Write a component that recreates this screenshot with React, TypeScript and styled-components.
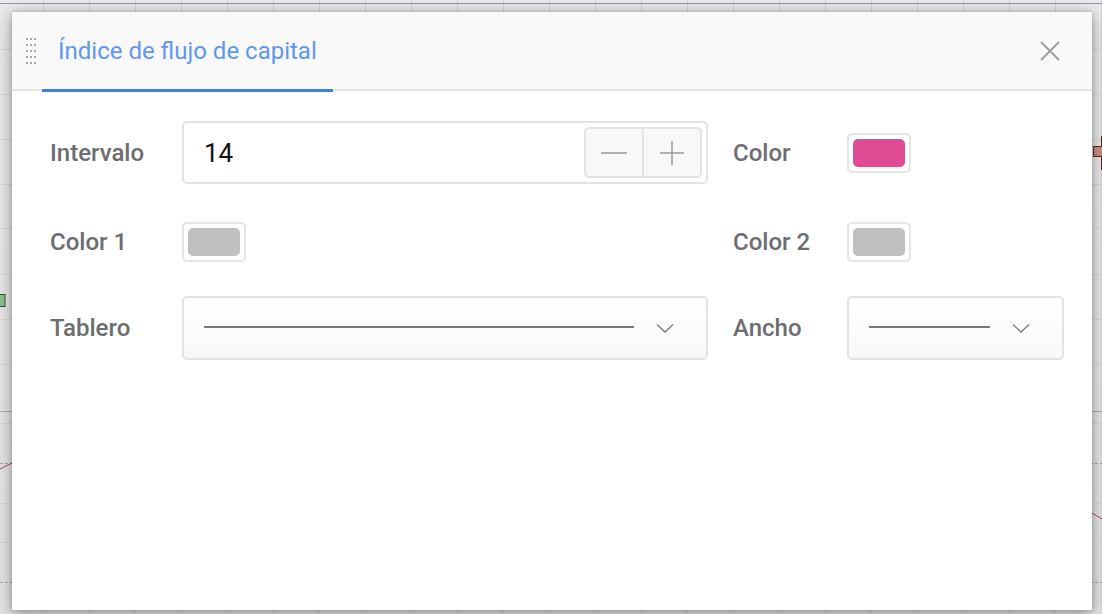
import React from "react";
import styled, { createGlobalStyle } from "styled-components";

const GlobalStyle = createGlobalStyle`
  html, body { margin: 0; padding: 0; }
  body {
    width: 1102px;
    height: 614px;
    overflow: hidden;
    font-family: Roboto, "Noto Sans", Arial, sans-serif;
    background: #e3e3e3;
  }
`;

const Page = styled.div`
  position: relative;
  width: 1102px;
  height: 614px;
  overflow: hidden;
  background: linear-gradient(180deg, #e9e9e9 0%, #e2e2e2 100%);
`;

const Backdrop = styled.svg`
  position: absolute;
  inset: 0;
  width: 1102px;
  height: 614px;
`;

const Modal = styled.section`
  position: relative;
  margin: 12px 0 0 12px;
  width: 1080px;
  height: 598px;
  background: #ffffff;
  box-shadow: 0 3px 14px rgba(0, 0, 0, 0.38), 0 0 4px rgba(0, 0, 0, 0.12);
  display: flex;
  flex-direction: column;
`;

const Header = styled.header`
  height: 77px;
  background: #f9f9f9;
  border-bottom: 2px solid #e4e4e4;
  display: flex;
  align-items: stretch;
  padding: 0 30px 0 14px;
`;

const DragHandle = styled.div`
  align-self: center;
  display: grid;
  grid-template-columns: repeat(3, 2px);
  grid-auto-rows: 2px;
  column-gap: 2px;
  row-gap: 4px;
  margin-right: 6px;
`;

const Dot = styled.span`
  width: 2px;
  height: 2px;
  background: #a8a8a8;
`;

const Tab = styled.div`
  position: relative;
  display: flex;
  align-items: center;
  padding: 0 16px;
  font-size: 24px;
  color: #5e97f3;
  &::after {
    content: "";
    position: absolute;
    left: 0;
    right: 0;
    bottom: -3px;
    height: 3px;
    background: #3f7fe2;
  }
`;

const Spacer = styled.div`
  flex: 1;
`;

const CloseButton = styled.button`
  align-self: center;
  width: 24px;
  height: 24px;
  padding: 0;
  border: none;
  background: transparent;
  display: flex;
  align-items: center;
  justify-content: center;
`;

const Body = styled.div`
  padding: 30px 28px 0 38px;
  display: flex;
  flex-direction: column;
`;

const Row = styled.div<{ $gap: number; $h: number }>`
  display: grid;
  grid-template-columns: 132px 526px 25px 114px 217px;
  align-items: center;
  height: ${(p) => p.$h}px;
  margin-top: ${(p) => p.$gap}px;
`;

const Label = styled.label<{ $col: number }>`
  grid-column: ${(p) => p.$col};
  font-size: 24px;
  font-weight: 500;
  color: #6c6c71;
`;

const Cell = styled.div<{ $col: number }>`
  grid-column: ${(p) => p.$col};
  display: flex;
  align-items: center;
  height: 100%;
`;

const NumberBox = styled.div`
  box-sizing: border-box;
  width: 526px;
  height: 63px;
  border: 2px solid #e3e3e3;
  border-radius: 5px;
  display: flex;
  align-items: center;
  padding: 0 4px 0 20px;
  background: #fff;
`;

const NumberValue = styled.span`
  flex: 1;
  font-size: 26px;
  color: #111;
`;

const Stepper = styled.div`
  box-sizing: border-box;
  width: 118px;
  height: 51px;
  border: 2px solid #e3e3e3;
  border-radius: 5px;
  background: #f8f8f8;
  display: flex;
`;

const StepButton = styled.button<{ $divider?: boolean }>`
  flex: 1;
  border: none;
  padding: 0;
  background: transparent;
  display: flex;
  align-items: center;
  justify-content: center;
  border-left: ${(p) => (p.$divider ? "2px solid #e3e3e3" : "none")};
`;

const Swatch = styled.div`
  box-sizing: border-box;
  width: 64px;
  height: 40px;
  border: 2px solid #e5e5e5;
  border-radius: 5px;
  padding: 4px;
  background: #fff;
`;

const SwatchFill = styled.div<{ $color: string }>`
  width: 100%;
  height: 100%;
  border-radius: 5px;
  background: ${(p) => p.$color};
`;

const Select = styled.div<{ $w: number }>`
  box-sizing: border-box;
  width: ${(p) => p.$w}px;
  height: 64px;
  border: 2px solid #e3e3e3;
  border-radius: 5px;
  background: linear-gradient(180deg, #ffffff 0%, #f8f8f8 100%);
  display: flex;
  align-items: center;
  padding: 0 32px 0 20px;
`;

const LineSample = styled.div`
  flex: 1;
  height: 2px;
  background: #787878;
  margin-top: -2px;
`;

const Chevron = styled.svg`
  margin-left: 22px;
  flex-shrink: 0;
`;

const ChevronIcon = () => (
  <Chevron width="18" height="10" viewBox="0 0 18 10">
    <path d="M1 1.5 L9 9 L17 1.5" fill="none" stroke="#7a7a7a" strokeWidth="1.3" />
  </Chevron>
);

const ChartBackground = () => {
  const vLines = [];
  for (let x = 43; x < 1102; x += 46) vLines.push(x);
  const hLines = [49, 94, 139, 184, 228, 274, 319, 364, 423, 503, 542];
  return (
    <Backdrop viewBox="0 0 1102 614">
      {vLines.map((x) => (
        <line key={"v" + x} x1={x + 0.5} y1={0} x2={x + 0.5} y2={614} stroke="#d3d3d3" strokeWidth="1" />
      ))}
      {hLines.map((y) => (
        <line key={"h" + y} x1={0} y1={y + 0.5} x2={1102} y2={y + 0.5} stroke="#d6d6d6" strokeWidth="1" />
      ))}
      <line x1={0} y1={411.5} x2={1102} y2={411.5} stroke="#a9a9a9" strokeWidth="1" />
      <line x1={0} y1={463.5} x2={1102} y2={463.5} stroke="#a5a5a5" strokeWidth="1" strokeDasharray="3 2" />
      <line x1={0} y1={582.5} x2={1102} y2={582.5} stroke="#a5a5a5" strokeWidth="1" strokeDasharray="3 2" />
      <line x1={0} y1={3.5} x2={1102} y2={3.5} stroke="#9198a6" strokeWidth="1" />
      <rect x={-2} y={294.5} width={7} height={12} fill="#8fbd8f" stroke="#2f5a2f" strokeWidth="1" />
      <line x1={1101.5} y1={136} x2={1101.5} y2={170} stroke="#5a2020" strokeWidth="1" />
      <rect x={1093.5} y={146.5} width={10} height={10} fill="#c98c82" stroke="#5a2a2a" strokeWidth="1" />
      <path d="M0 469 L12 463" stroke="#b0407a" strokeWidth="1" fill="none" />
      <path d="M1092 513 L1102 519" stroke="#b0407a" strokeWidth="1" fill="none" />
    </Backdrop>
  );
};

export default function App() {
  return (
    <>
      <GlobalStyle />
      <Page>
        <ChartBackground />
        <Modal>
          <Header>
            <DragHandle>
              {Array.from({ length: 15 }).map((_, i) => (
                <Dot key={i} />
              ))}
            </DragHandle>
            <Tab>Índice de flujo de capital</Tab>
            <Spacer />
            <CloseButton aria-label="Cerrar">
              <svg width="20" height="20" viewBox="0 0 20 20">
                <path d="M1 1 L19 19 M19 1 L1 19" stroke="#9aa0a6" strokeWidth="2" fill="none" />
              </svg>
            </CloseButton>
          </Header>
          <Body>
            <Row $gap={0} $h={63}>
              <Label $col={1}>Intervalo</Label>
              <Cell $col={2}>
                <NumberBox>
                  <NumberValue>14</NumberValue>
                  <Stepper>
                    <StepButton aria-label="menos">
                      <svg width="26" height="2" viewBox="0 0 26 2">
                        <line x1="0" y1="1" x2="26" y2="1" stroke="#9a9a9a" strokeWidth="1.5" />
                      </svg>
                    </StepButton>
                    <StepButton $divider aria-label="más">
                      <svg width="24" height="24" viewBox="0 0 24 24">
                        <path d="M0 12 H24 M12 0 V24" stroke="#9a9a9a" strokeWidth="1.5" fill="none" />
                      </svg>
                    </StepButton>
                  </Stepper>
                </NumberBox>
              </Cell>
              <Label $col={4}>Color</Label>
              <Cell $col={5}>
                <Swatch>
                  <SwatchFill $color="#e04c94" />
                </Swatch>
              </Cell>
            </Row>
            <Row $gap={38} $h={40}>
              <Label $col={1}>Color 1</Label>
              <Cell $col={2}>
                <Swatch>
                  <SwatchFill $color="#c0c0c0" />
                </Swatch>
              </Cell>
              <Label $col={4}>Color 2</Label>
              <Cell $col={5}>
                <Swatch>
                  <SwatchFill $color="#c0c0c0" />
                </Swatch>
              </Cell>
            </Row>
            <Row $gap={34} $h={64}>
              <Label $col={1}>Tablero</Label>
              <Cell $col={2}>
                <Select $w={526}>
                  <LineSample />
                  <ChevronIcon />
                </Select>
              </Cell>
              <Label $col={4}>Ancho</Label>
              <Cell $col={5}>
                <Select $w={217}>
                  <LineSample />
                  <ChevronIcon />
                </Select>
              </Cell>
            </Row>
          </Body>
        </Modal>
      </Page>
    </>
  );
}
